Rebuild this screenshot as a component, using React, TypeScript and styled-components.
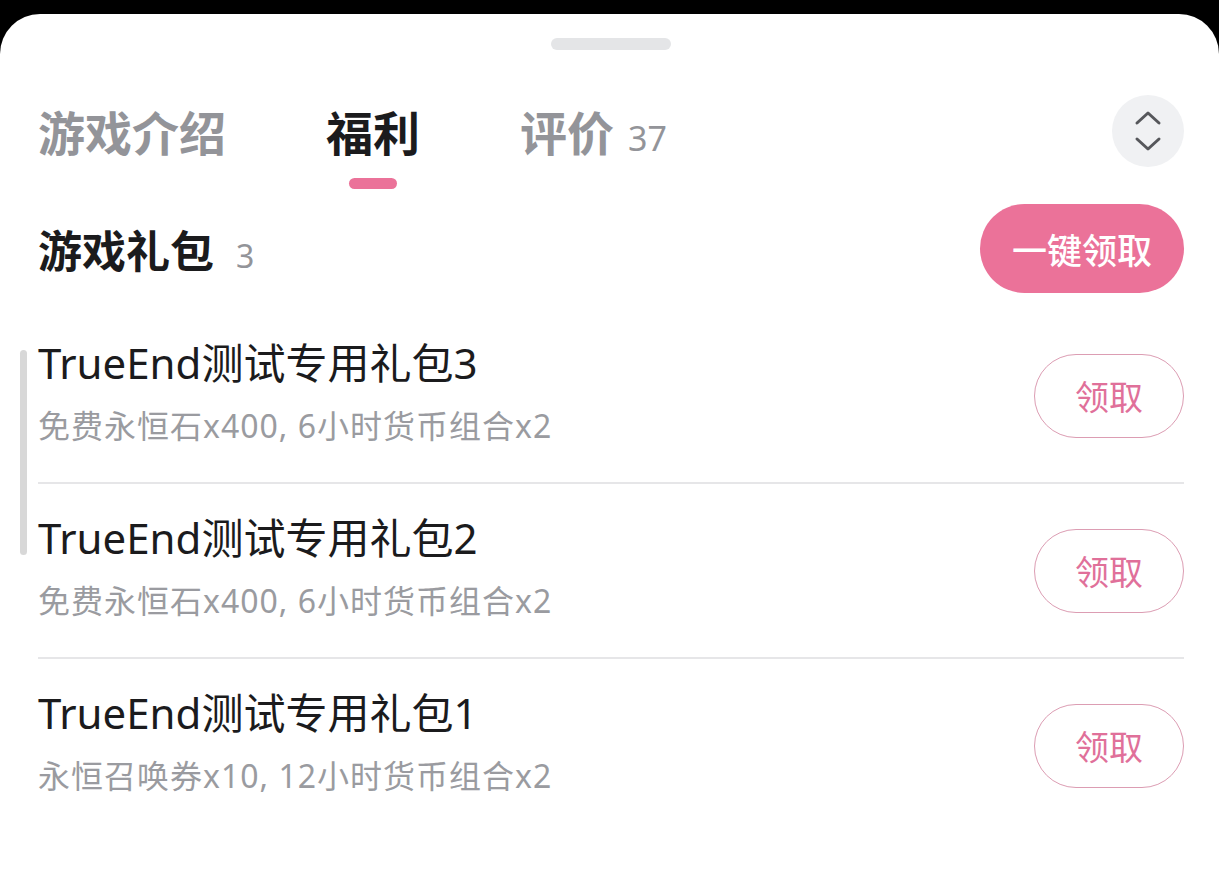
import React from 'react';
import styled, { createGlobalStyle } from 'styled-components';

const GlobalStyle = createGlobalStyle`
  html, body {
    margin: 0;
    padding: 0;
    background: #000;
    font-family: "Noto Sans", "Noto Sans CJK SC", sans-serif;
  }
  * { box-sizing: border-box; }
`;

const Sheet = styled.div`
  position: relative;
  margin-top: 14px;
  min-height: 872px;
  background: #fff;
  border-radius: 40px 40px 0 0;
  padding: 24px 35px 0 38px;
`;

const Handle = styled.div`
  width: 120px;
  height: 12px;
  margin: 0 auto;
  border-radius: 6px;
  background: #e4e5e7;
`;

const TabBar = styled.div`
  display: flex;
  align-items: center;
  margin-top: 45px;
  height: 72px;
`;

const Tabs = styled.div`
  flex: 1;
  display: flex;
  gap: 100px;
`;

const Tab = styled.div<{ $active?: boolean }>`
  position: relative;
  display: flex;
  align-items: baseline;
  font-family: "Noto Sans CJK SC", sans-serif;
  font-size: 47px;
  font-weight: 700;
  line-height: 1;
  color: ${p => (p.$active ? '#1b1b1d' : '#939499')};
`;

const TabCount = styled.span`
  margin-left: 14px;
  font-family: "Noto Sans", sans-serif;
  font-size: 34px;
  font-weight: 400;
  color: #939499;
`;

const Indicator = styled.span`
  position: absolute;
  left: 50%;
  bottom: -34px;
  width: 48px;
  height: 11px;
  margin-left: -24px;
  border-radius: 6px;
  background: #eb7299;
`;

const ToggleButton = styled.button`
  width: 72px;
  height: 72px;
  border: none;
  border-radius: 50%;
  background: #f0f1f3;
  display: flex;
  align-items: center;
  justify-content: center;
  padding: 0;
`;

const SectionHeader = styled.div`
  display: flex;
  align-items: center;
  justify-content: space-between;
  margin-top: 37px;
`;

const SectionTitle = styled.div`
  display: flex;
  align-items: baseline;
  font-family: "Noto Sans CJK SC", sans-serif;
  font-size: 44px;
  font-weight: 600;
  color: #1b1b1d;
`;

const SectionCount = styled.span`
  margin-left: 22px;
  font-family: "Noto Sans", sans-serif;
  font-size: 32px;
  font-weight: 400;
  color: #939499;
`;

const ClaimAllButton = styled.button`
  width: 204px;
  height: 89px;
  border: none;
  border-radius: 45px;
  background: #eb7299;
  color: #fff;
  font-family: "Noto Sans CJK SC", sans-serif;
  font-size: 35px;
  font-weight: 500;
  padding: 0;
`;

const List = styled.div`
  margin-top: 16px;
`;

const Row = styled.div<{ $last?: boolean }>`
  height: 175px;
  display: flex;
  align-items: center;
  justify-content: space-between;
  border-bottom: 2px solid ${p => (p.$last ? 'transparent' : '#e6e6e8')};
`;

const RowText = styled.div`
  display: flex;
  flex-direction: column;
  gap: 18px;
  padding-bottom: 8px;
`;

const ItemTitle = styled.div`
  font-size: 42px;
  line-height: 1.2;
  color: #1b1b1d;
`;

const ItemDesc = styled.div`
  font-size: 32px;
  line-height: 1.2;
  letter-spacing: 1px;
  color: #9a9ba0;
`;

const ClaimButton = styled.button`
  width: 150px;
  height: 84px;
  border: 1.5px solid #dc9db3;
  border-radius: 42px;
  background: #fff;
  color: #e0709a;
  font-family: "Noto Sans CJK SC", sans-serif;
  font-size: 34px;
  padding: 0;
`;

const ScrollThumb = styled.div`
  position: absolute;
  left: 20px;
  top: 336px;
  width: 7px;
  height: 205px;
  border-radius: 4px;
  background: #d8d8d8;
`;

const gifts = [
  { title: 'TrueEnd测试专用礼包3', desc: '免费永恒石x400, 6小时货币组合x2' },
  { title: 'TrueEnd测试专用礼包2', desc: '免费永恒石x400, 6小时货币组合x2' },
  { title: 'TrueEnd测试专用礼包1', desc: '永恒召唤券x10, 12小时货币组合x2' },
];

const ChevronToggle = () => (
  <svg width="30" height="44" viewBox="0 0 30 44" fill="none" stroke="#56575b" strokeWidth="3" strokeLinecap="round" strokeLinejoin="round">
    <path d="M4 14 L15 4 L26 14" />
    <path d="M4 30 L15 40 L26 30" />
  </svg>
);

const App: React.FC = () => (
  <>
    <GlobalStyle />
    <Sheet>
      <Handle />
      <TabBar>
        <Tabs>
          <Tab>游戏介绍</Tab>
          <Tab $active>
            福利
            <Indicator />
          </Tab>
          <Tab>
            评价<TabCount>37</TabCount>
          </Tab>
        </Tabs>
        <ToggleButton>
          <ChevronToggle />
        </ToggleButton>
      </TabBar>

      <SectionHeader>
        <SectionTitle>
          游戏礼包<SectionCount>3</SectionCount>
        </SectionTitle>
        <ClaimAllButton>一键领取</ClaimAllButton>
      </SectionHeader>

      <List>
        {gifts.map((g, i) => (
          <Row key={g.title} $last={i === gifts.length - 1}>
            <RowText>
              <ItemTitle>{g.title}</ItemTitle>
              <ItemDesc>{g.desc}</ItemDesc>
            </RowText>
            <ClaimButton>领取</ClaimButton>
          </Row>
        ))}
      </List>
      <ScrollThumb />
    </Sheet>
  </>
);

export default App;
